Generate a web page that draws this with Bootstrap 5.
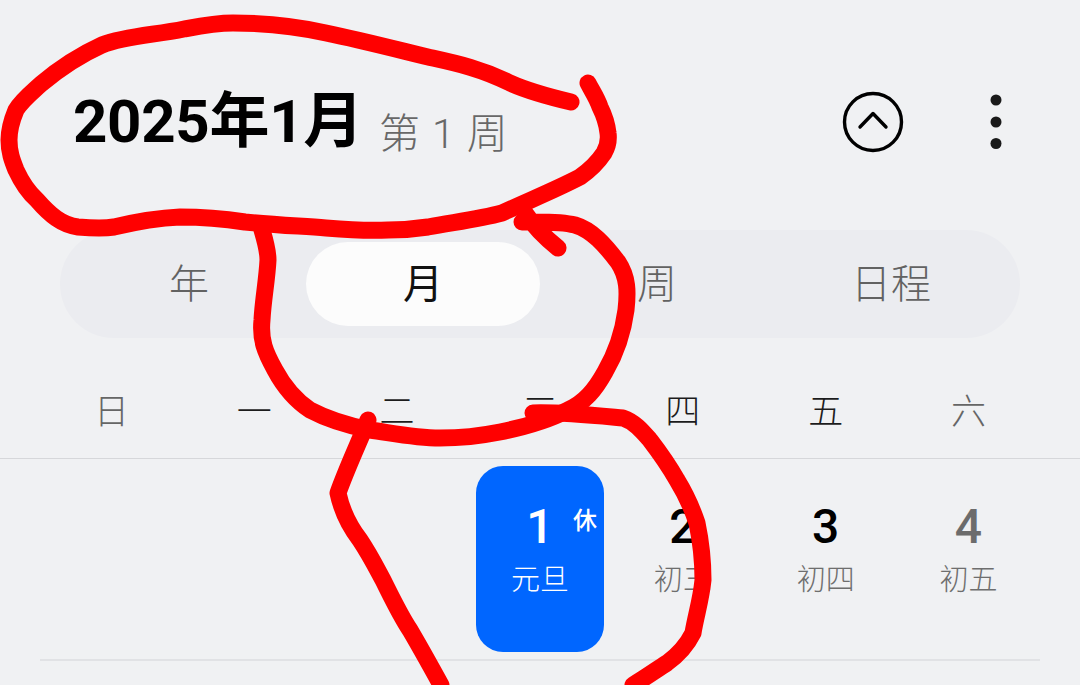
<!DOCTYPE html>
<html lang="zh">
<head>
<meta charset="utf-8">
<title>日历</title>
<link href="https://cdn.jsdelivr.net/npm/bootstrap@5.3.0/dist/css/bootstrap.min.css" rel="stylesheet">
<style>
html,body{height:685px;overflow:hidden}
body{background:#f0f1f3;font-family:Roboto,"Noto Sans CJK SC",sans-serif;position:relative;width:1080px}
.top-bar{height:230px;padding:14px 78px 0 73px}
.month-title{font-size:60px;font-weight:700;color:#000;line-height:1;letter-spacing:-.3px;margin:0}
.week-no{font-size:41px;font-weight:300;color:#686868;line-height:1;margin-left:16px;word-spacing:2px;position:relative;top:6px}
.icon-gap{gap:86px}
.seg{margin:0 60px;height:108px;padding:12px;background:#ebecf0;border-radius:54px}
.seg-item{flex:0 0 234px;font-size:40px;font-weight:300;color:#626262;border-radius:42px;line-height:1;padding-top:2px}
.seg-item.on{background:#fcfcfc;color:#111;font-weight:400}
.wk-row{padding:0 40px;height:121px;border-bottom:1px solid #d6d7da}
.wk{flex:0 0 calc(100%/7);font-size:35px;font-weight:300;color:#1c1c1c;line-height:1;padding-top:57px;text-align:center}
.wk.off{color:#666}
.day-row{padding:7px 40px 0}
.day{flex:0 0 calc(100%/7);height:186px;display:flex;justify-content:center}
.day-inner{width:128px;height:186px;border-radius:27px;position:relative;text-align:center;padding-top:37px}
.day-num{font-size:48px;font-weight:500;line-height:1;color:#000}
.day-sub{font-size:29px;font-weight:300;line-height:1;color:#6e6e6e;margin-top:15px}
.day-inner.today{background:#0066ff}
.today .day-num,.today .day-sub{color:#fff}
.day-tag{position:absolute;left:97px;top:43px;font-size:24px;line-height:1;color:#fff;font-weight:500}
.sat .day-num{color:#6c6c6c}
.rule2{height:2px;background:#e1e2e5;margin:7px 40px 0}
.scribble{position:absolute;left:0;top:0;pointer-events:none}
</style>
</head>
<body>
<header class="top-bar d-flex align-items-center justify-content-between">
  <div class="d-flex align-items-baseline">
    <h1 class="month-title">2025年1月</h1>
    <span class="week-no">第 1 周</span>
  </div>
  <div class="d-flex align-items-center icon-gap">
    <svg width="62" height="62" viewBox="0 0 62 62" aria-label="收起"><circle cx="31" cy="31" r="28.5" fill="none" stroke="#000" stroke-width="3.4"/><path d="M18 36 31 22.500 44 36" fill="none" stroke="#000" stroke-width="3.4" stroke-linecap="round" stroke-linejoin="round"/></svg>
    <svg width="12" height="56" viewBox="0 0 12 56" aria-label="更多"><circle cx="6" cy="6" r="5.500" fill="#1a1a1a"/><circle cx="6" cy="28" r="5.500" fill="#1a1a1a"/><circle cx="6" cy="49.500" r="5.500" fill="#1a1a1a"/></svg>
  </div>
</header>

<nav class="seg d-flex">
  <div class="seg-item d-flex align-items-center justify-content-center">年</div>
  <div class="seg-item on d-flex align-items-center justify-content-center">月</div>
  <div class="seg-item d-flex align-items-center justify-content-center">周</div>
  <div class="seg-item d-flex align-items-center justify-content-center">日程</div>
</nav>

<div class="wk-row d-flex">
  <div class="wk off">日</div><div class="wk">一</div><div class="wk">二</div><div class="wk">三</div><div class="wk">四</div><div class="wk">五</div><div class="wk off">六</div>
</div>

<div class="day-row d-flex">
  <div class="day"></div><div class="day"></div><div class="day"></div>
  <div class="day"><div class="day-inner today"><div class="day-num">1</div><div class="day-sub">元旦</div><span class="day-tag">休</span></div></div>
  <div class="day"><div class="day-inner"><div class="day-num">2</div><div class="day-sub">初三</div></div></div>
  <div class="day"><div class="day-inner"><div class="day-num">3</div><div class="day-sub">初四</div></div></div>
  <div class="day sat"><div class="day-inner"><div class="day-num">4</div><div class="day-sub">初五</div></div></div>
</div>
<div class="rule2"></div>

<svg class="scribble" width="1080" height="685" viewBox="0 0 1080 685" fill="none" stroke="#ff0000" stroke-width="17" stroke-linecap="round" stroke-linejoin="round">
  <path d="M571 102C550 97 530 92 510 83C480 68 455 63 428 57C395 49 360 40 326 33C295 26 265 23 233 23C215 23 200 26 184 29C155 35 125 36 102 45C80 55 60 68 41 84C30 94 22 100 16 110C11 122 9 130 9 140C9 152 12 160 16 170C22 183 28 192 37 200C50 215 62 225 78 227C90 228 102 229 114 227C135 222 158 218 180 217C200 217 225 219 245 222C275 225 300 226 326 228C350 230 370 231 388 230C402 230 415 229 428 227C455 222 480 219 502 213C530 200 555 190 580 177C590 170 598 162 604 153C608 146 609 140 608 133C607 124 604 115 600 107C597 98 592 91 588 83"/>
  <path d="M558 248C548 240 535 228 525 213M522 222C540 222 560 221 575 225C592 230 605 245 618 262C628 277 628 292 626 310C622 340 612 360 605 372C595 390 585 402 568 410C545 422 520 428 500 432C480 436 460 438 440 438C415 438 392 433 370 430C345 425 325 418 310 410C295 400 283 385 275 370C265 352 260 340 262 320C263 300 267 280 268 260C268 250 265 240 262 230"/>
  <path d="M368 420C360 440 346 470 338 493C342 512 350 527 360 540C370 555 376 567 383 580C392 598 400 615 410 630C420 647 430 665 441 685"/>
  <path d="M533 413C560 412 600 416 623 418C635 422 643 432 650 440C660 453 669 466 677 480C685 493 692 508 697 523C701 542 703 560 703 580C701 600 696 615 693 633C687 645 678 655 667 663C656 670 645 678 633 685"/>
</svg>
<script src="https://cdn.jsdelivr.net/npm/bootstrap@5.3.0/dist/js/bootstrap.bundle.min.js"></script>
</body>
</html>
